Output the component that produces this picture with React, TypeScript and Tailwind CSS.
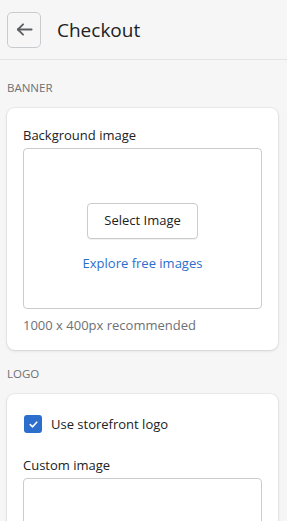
import React from "react";

const font = { fontFamily: '"Open Sans", "Noto Sans", sans-serif' };

function BackButton() {
  return (
    <button
      className="flex h-9 w-[34px] items-center justify-center rounded-[5px] border border-[#c9cccf] bg-transparent text-[#5c5f62]"
      aria-label="Back"
    >
      <svg viewBox="0 0 20 20" className="h-[19px] w-[19px]" fill="none" stroke="currentColor" strokeWidth="1.9" strokeLinecap="round" strokeLinejoin="round">
        <path d="M17.5 10H3" />
        <path d="M8.5 4.5L3 10L8.5 15.5" />
      </svg>
    </button>
  );
}

function SectionTitle({ children, top }: { children: React.ReactNode; top: string }) {
  return (
    <p className={`px-[7px] pb-3 text-[11.5px] leading-[16px] uppercase text-[#6d7175] ${top}`}>
      {children}
    </p>
  );
}

const card =
  "ml-[7px] mr-[9px] rounded-lg bg-white px-4 shadow-[0_0_0_1px_rgba(63,63,68,0.05),0_1px_3px_rgba(63,63,68,0.15)]";

export default function App() {
  return (
    <div className="min-h-[521px] w-full overflow-hidden bg-[#f6f6f7] text-[#202223]" style={font}>
      <header className="flex h-[60px] items-center gap-4 border-b border-[#e1e3e5] px-[7px]">
        <BackButton />
        <h1 className="text-[19px] leading-[28px] font-normal">Checkout</h1>
      </header>

      <SectionTitle top="pt-5">Banner</SectionTitle>
      <div className={`${card} pt-[17px] pb-[15px]`}>
        <p className="text-[13px] leading-[20px]">Background image</p>
        <div className="mt-[3px] flex h-[161px] flex-col items-center rounded-[4px] border border-[#c9cccf] pt-[54px]">
          <button className="h-9 w-[111px] rounded-[4px] border border-[#c9cccf] bg-white text-[13px] shadow-[0_1px_0_rgba(0,0,0,0.05)]">
            Select Image
          </button>
          <a className="mt-[14px] text-[13px] leading-[20px] text-[#2c6ecb]">Explore free images</a>
        </div>
        <p className="mt-[6px] text-[13px] leading-[20px] text-[#6d7175]">1000 x 400px recommended</p>
      </div>

      <SectionTitle top="pt-4">Logo</SectionTitle>
      <div className={`${card} pt-5 pb-4`}>
        <label className="flex items-center gap-[9px]">
          <span className="ml-[1px] flex h-[18px] w-[18px] items-center justify-center rounded-[3px] bg-[#2c6ecb]">
            <svg viewBox="0 0 12 12" className="h-[11px] w-[11px]" fill="none" stroke="white" strokeWidth="1.8" strokeLinecap="round" strokeLinejoin="round">
              <path d="M2.5 6.2L5 8.5L9.5 3.5" />
            </svg>
          </span>
          <span className="text-[13px] leading-[20px]">Use storefront logo</span>
        </label>
        <p className="mt-[21px] text-[13px] leading-[20px]">Custom image</p>
        <div className="mt-[3px] h-[161px] rounded-[4px] border border-[#c9cccf]" />
      </div>
    </div>
  );
}
